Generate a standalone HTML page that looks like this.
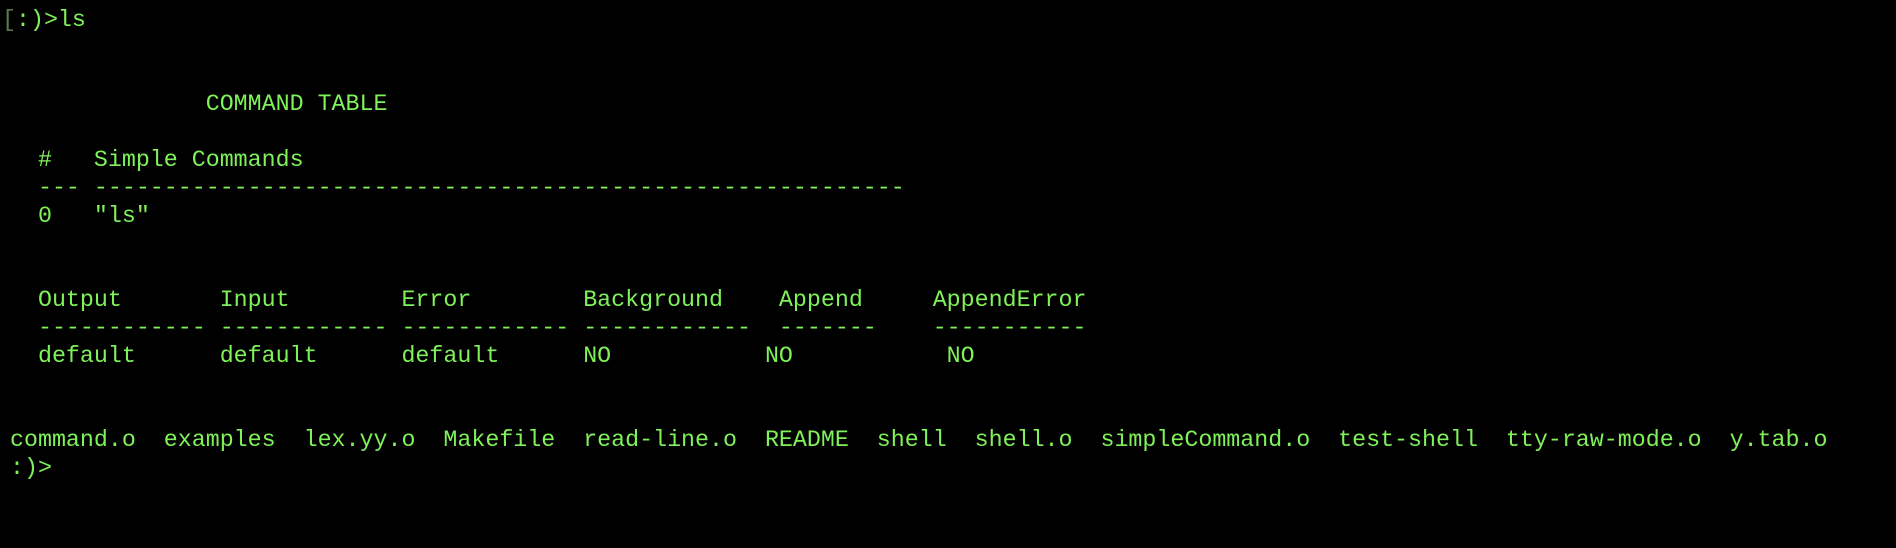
<!DOCTYPE html>
<html><head><meta charset="utf-8"><style>
html,body{margin:0;padding:0;background:#000;width:1896px;height:548px;overflow:hidden}
pre{margin:0;position:absolute;left:10px;top:6px;font-family:"Liberation Mono","DejaVu Sans Mono",monospace;font-size:23.3px;line-height:28px;color:#7ff25a;white-space:pre}
.d{color:#5c7a4a}
.p{position:relative;left:-8px}
</style></head><body>
<pre><span class="p"><span class="d">[</span>:)&gt;ls</span>


              COMMAND TABLE

  #   Simple Commands
  --- ----------------------------------------------------------
  0   "ls"


  Output       Input        Error        Background    Append     AppendError
  ------------ ------------ ------------ ------------  -------    -----------
  default      default      default      NO           NO           NO


command.o  examples  lex.yy.o  Makefile  read-line.o  README  shell  shell.o  simpleCommand.o  test-shell  tty-raw-mode.o  y.tab.o
:)&gt;</pre>
</body></html>
